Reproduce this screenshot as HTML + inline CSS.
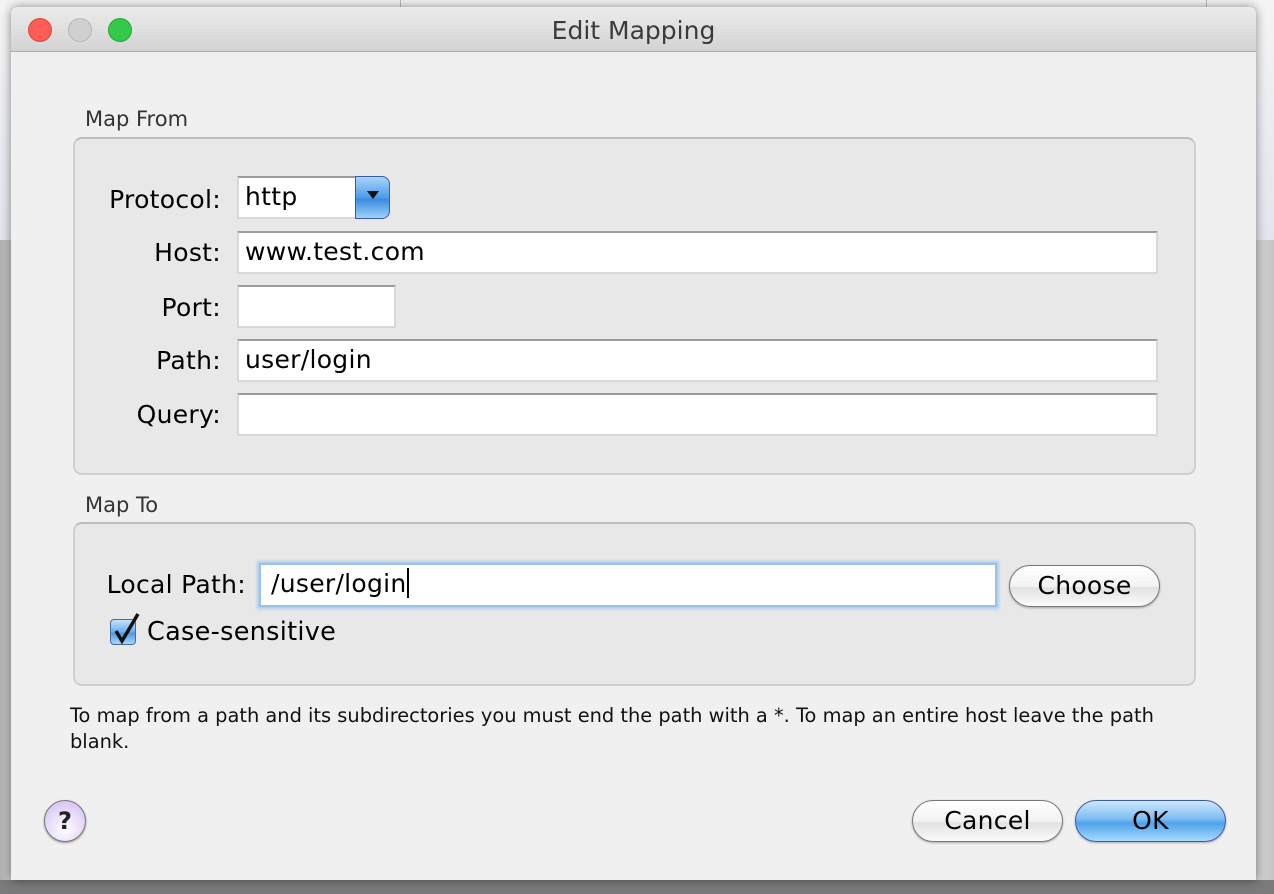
<!DOCTYPE html>
<html><head><meta charset="utf-8"><style>
*{box-sizing:border-box;margin:0;padding:0}
body{width:1274px;height:894px;position:relative;overflow:hidden;background:#8a8a8a;font-family:"DejaVu Sans","Liberation Sans",sans-serif;color:#000}
.bgtop{position:absolute;left:0;top:0;width:1274px;height:240px;background:linear-gradient(#f4f4f4,#e2e5ec)}
.bgstrip{position:absolute;left:0;top:240px;width:1274px;height:654px;background:linear-gradient(90deg,#b0b0b0,#d0d0d0 15px,#d0d0d0 1260px,#c4c4c4)}
.bottom{position:absolute;left:0;top:880px;width:1274px;height:14px;background:#7a7a7a}
.win{position:absolute;left:11px;top:7px;width:1245px;height:873px;background:#f0f0f0;border-radius:7px 7px 0 0;box-shadow:0 0 10px rgba(0,0,0,.45)}
.title{position:absolute;left:0;top:0;width:100%;height:45px;border-radius:7px 7px 0 0;background:linear-gradient(#ececec,#d3d3d3);border-bottom:1px solid #acacac;text-align:center;font-size:25px;line-height:48px;color:#3b3b3b}
.dot{position:absolute;top:11px;width:24px;height:24px;border-radius:50%}
.lbl{position:absolute;font-size:21px;color:#333}
.box{position:absolute;left:62px;width:1123px;background:#e8e8e8;border:2px solid #cfcfcf;border-top-color:#bdbdbd;border-radius:9px}
.fl{position:absolute;font-size:25px;letter-spacing:0.3px;text-align:right;width:200px}
.f{position:absolute;background:#fff;border:2px solid #d8d8d8;border-top-color:#9c9c9c;font-size:25px;letter-spacing:0.3px;padding-left:6px;line-height:38px}
.btn{position:absolute;height:42px;border-radius:21px;border:1.5px solid #777;background:linear-gradient(#fff,#f3f3f3 50%,#e2e2e2 55%,#fafafa);font-size:25px;letter-spacing:0.3px;text-align:center;line-height:39px;box-shadow:0 1px 2px rgba(0,0,0,.3)}
.note{position:absolute;left:59px;top:696px;font-size:19.4px;line-height:26px;white-space:nowrap;color:#111}
</style></head><body>
<div class="bgtop"></div><div class="bgstrip"></div>
<div style="position:absolute;left:400px;top:0;width:1px;height:7px;background:#bbb"></div>
<div style="position:absolute;left:1206px;top:0;width:1px;height:7px;background:#bbb"></div>
<div class="bottom"></div>
<div class="win">
 <div class="title">Edit Mapping
  <div class="dot" style="left:17px;background:#fc5e57;border:1px solid #e0443e"></div>
  <div class="dot" style="left:57px;background:#d0d0d0;border:1px solid #b8b8b8"></div>
  <div class="dot" style="left:97px;background:#35c84a;border:1px solid #22aa35"></div>
 </div>
 <div class="lbl" style="left:74px;top:100px">Map From</div>
 <div class="box" style="top:130px;height:338px"></div>
 <div class="fl" style="left:10px;top:178px">Protocol:</div>
 <div class="f" style="left:226px;top:169px;width:120px;height:43px">http</div>
 <div style="position:absolute;left:344px;top:169px;width:35px;height:43px;border-radius:0 8px 8px 0;background:linear-gradient(#aad4f8,#4e9ce8 50%,#3b8ae0 55%,#9fd3fb);border:1px solid #3a5ca8"><div style="position:absolute;left:11px;top:14px;width:0;height:0;border-left:6px solid transparent;border-right:6px solid transparent;border-top:8px solid #111"></div></div>
 <div class="fl" style="left:10px;top:231px">Host:</div>
 <div class="f" style="left:226px;top:224px;width:921px;height:43px">www.test.com</div>
 <div class="fl" style="left:10px;top:286px">Port:</div>
 <div class="f" style="left:226px;top:278px;width:159px;height:43px"></div>
 <div class="fl" style="left:10px;top:339px">Path:</div>
 <div class="f" style="left:226px;top:332px;width:921px;height:43px">user/login</div>
 <div class="fl" style="left:10px;top:393px">Query:</div>
 <div class="f" style="left:226px;top:386px;width:921px;height:43px"></div>
 <div class="lbl" style="left:74px;top:486px">Map To</div>
 <div class="box" style="top:515px;height:164px"></div>
 <div class="fl" style="left:35px;top:563px">Local Path:</div>
 <div class="f" style="left:248px;top:556px;width:738px;height:44px;border:2px solid #9cc3e6;box-shadow:0 0 3px 2px #a9cdf0;padding-left:10px">/user/login<span style="display:inline-block;width:2px;height:30px;background:#000;vertical-align:-6px"></span></div>
 <div class="btn" style="left:998px;top:558px;width:151px">Choose</div>
 <div style="position:absolute;left:99px;top:612px;width:26px;height:26px;border-radius:4px;border:1px solid #4a6a9a;background:linear-gradient(#c6e3fb,#6aaef0 50%,#4d98e6 55%,#a9d6fa)"></div>
 <svg style="position:absolute;left:100px;top:603px" width="32" height="36"><path d="M5 21 L11 31 L27 4" stroke="#111" stroke-width="3.5" fill="none"/></svg>
 <div style="position:absolute;left:136px;top:610px;font-size:25.5px;letter-spacing:0.3px">Case-sensitive</div>
 <div class="note">To map from a path and its subdirectories you must end the path with a *. To map an entire host leave the path<br>blank.</div>
 <div style="position:absolute;left:33px;top:793px;width:42px;height:42px;border-radius:50%;border:1.5px solid #777;background:radial-gradient(circle at 50% 70%,#fff,#e7dcfb 50%,#cbb8f0);box-shadow:0 1px 2px rgba(0,0,0,.4);text-align:center;font-size:24px;font-weight:bold;line-height:40px;color:#222">?</div>
 <div class="btn" style="left:901px;top:793px;width:151px">Cancel</div>
 <div class="btn" style="left:1064px;top:793px;width:151px;border-color:#3a5ca8;background:linear-gradient(#cfe8fd,#7dbcf2 45%,#4fa2ec 55%,#a6dbfd)">OK</div>
</div>
</body></html>
